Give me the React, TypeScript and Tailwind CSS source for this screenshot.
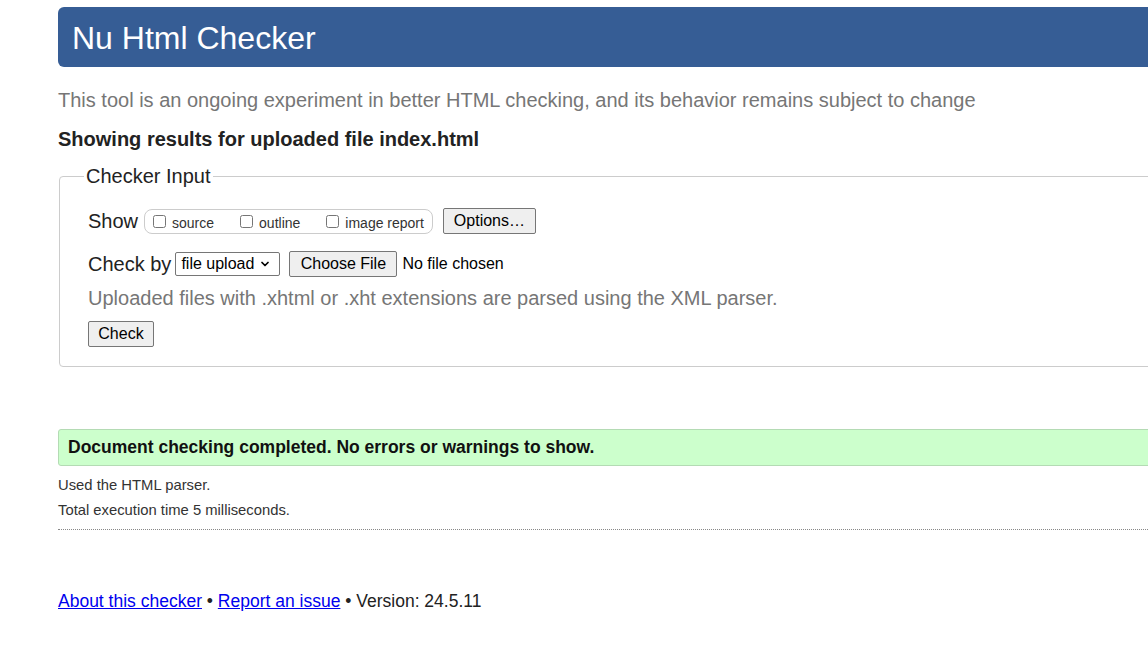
import { ChevronDown } from 'lucide-react'

function NativeButton({ label, className = '' }: { label: string; className?: string }) {
  return (
    <button
      type="button"
      className={`h-[26px] rounded-[2px] border border-[#767676] bg-[#efefef] px-[9px] text-[16px] leading-none text-black ${className}`}
    >
      {label}
    </button>
  )
}

function ShowOption({ label }: { label: string }) {
  return (
    <label className="flex items-center">
      <input type="checkbox" className="m-0 h-[13px] w-[13px]" />
      <span className="ml-[6px] pt-[3px] text-[14px] leading-none text-[#333]">{label}</span>
    </label>
  )
}

export default function App() {
  return (
    <div
      className="min-h-[672px] w-screen overflow-hidden bg-white text-[#222]"
      style={{ fontFamily: '"Liberation Sans", Arial, sans-serif' }}
    >
      <div className="ml-[58px] w-[1200px] pt-[7px]">
        <header className="flex h-[60px] items-center rounded-l-[6px] bg-[#365d95] pl-[14px]">
          <h1 className="pt-[2px] text-[32px] leading-none text-white">Nu Html Checker</h1>
        </header>

        <p className="mt-[22px] h-[23px] text-[20px] leading-[23px] text-[#767676]">
          This tool is an ongoing experiment in better HTML checking, and its behavior remains subject to change
        </p>

        <p className="mt-[16px] h-[22px] text-[20px] font-bold leading-[22px] text-[#222]">
          Showing results for uploaded file index.html
        </p>

        <fieldset className="ml-px mt-[16px] rounded-[4px] border border-[#cccccc] pb-[19px] pl-[24px]">
          <legend className="px-[2px] text-[20px] leading-[21px] text-[#222]">Checker Input</legend>

          <div className="ml-[4px]">
            <div className="mt-[21px] flex h-[26px] items-center">
              <span className="text-[20px] leading-none">Show</span>
              <div className="ml-[6px] flex h-[25px] items-center gap-[26px] rounded-[8px] border border-[#cccccc] pl-[8px] pr-[8px]">
                <ShowOption label="source" />
                <ShowOption label="outline" />
                <ShowOption label="image report" />
              </div>
              <NativeButton label="Options…" className="ml-[10px] w-[93px]" />
            </div>

            <div className="mt-[17px] flex h-[26px] items-center">
              <span className="text-[20px] leading-none">Check by</span>
              <div className="ml-[4px] flex h-[24px] w-[105px] items-center rounded-[2px] border border-[#767676] pl-[5px] text-[16px] leading-none text-black">
                <span>file upload</span>
                <ChevronDown size={12} strokeWidth={3.5} className="ml-[5px]" />
              </div>
              <NativeButton label="Choose File" className="ml-[9px] w-[108px]" />
              <span className="ml-[5px] text-[16px] leading-none text-black">No file chosen</span>
            </div>

            <p className="mt-[10px] h-[23px] text-[20px] leading-[23px] text-[#767676]">
              Uploaded files with .xhtml or .xht extensions are parsed using the XML parser.
            </p>

            <div className="mt-[11px] flex">
              <NativeButton label="Check" className="w-[66px]" />
            </div>
          </div>
        </fieldset>

        <div className="mt-[62px] flex h-[37px] items-center rounded-l-[3px] border border-[#b4dbb4] bg-[#ccffcc] pl-[9px]">
          <span className="pt-px text-[17.5px] font-bold leading-none text-[#111]">
            Document checking completed. No errors or warnings to show.
          </span>
        </div>

        <p className="mt-[10px] text-[14.8px] leading-[18px] text-[#333]">Used the HTML parser.</p>
        <p className="mt-[7px] text-[14.8px] leading-[18px] text-[#333]">Total execution time 5 milliseconds.</p>

        <div className="mt-[10px] border-b border-dotted border-[#888]" />

        <footer className="mt-[60px] text-[17.5px] leading-[22px] text-[#222]">
          <a href="#" className="text-[#0000ee] underline">About this checker</a>
          {' • '}
          <a href="#" className="text-[#0000ee] underline">Report an issue</a>
          {' • Version: 24.5.11'}
        </footer>
      </div>
    </div>
  )
}
